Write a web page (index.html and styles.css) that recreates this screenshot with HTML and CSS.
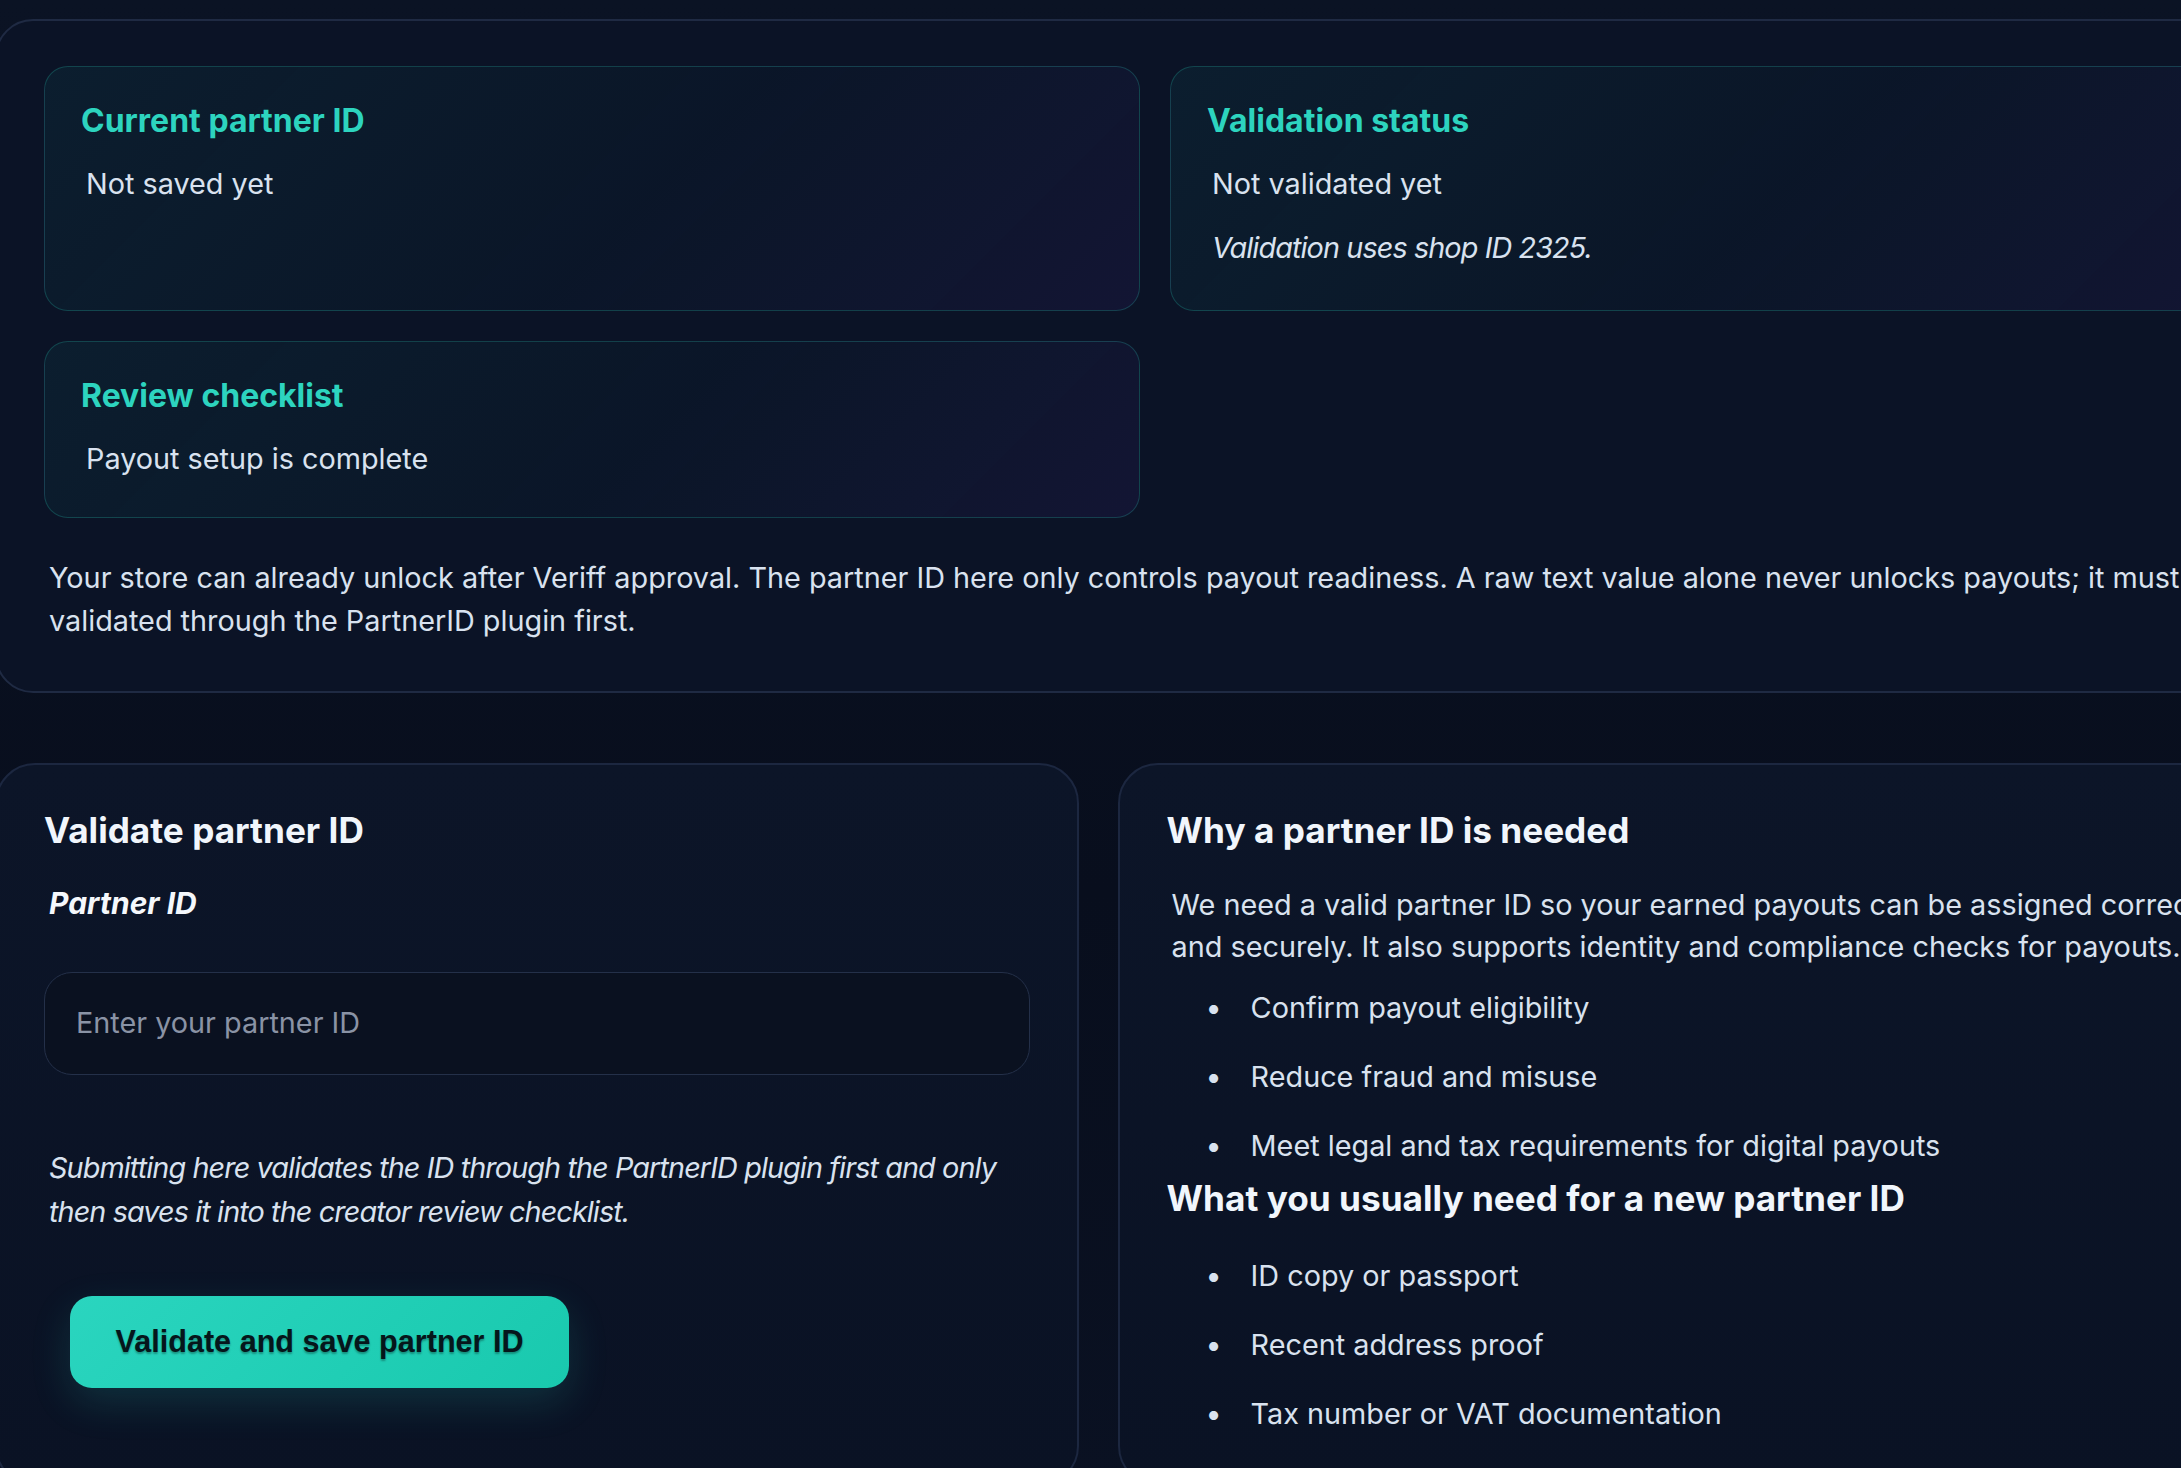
FILE: index.html
```html
<!DOCTYPE html>
<html lang="en">
<head>
    <meta charset="UTF-8">
    <meta name="viewport" content="width=device-width, initial-scale=1.0">
    <title>Partner ID</title>
    <link rel="stylesheet" href="styles.css">
</head>
<body>

<div class="page">
    <section class="summary">
        <div class="status-grid">
            <div class="status-card">
                <h3>Current partner ID</h3>
                <p class="value">Not saved yet</p>
            </div>
            <div class="status-card">
                <h3>Validation status</h3>
                <p class="value">Not validated yet</p>
                <p class="value hint">Validation uses shop ID 2325.</p>
            </div>
            <div class="status-card">
                <h3>Review checklist</h3>
                <p class="value">Payout setup is complete</p>
            </div>
        </div>
        <p class="note">Your store can already unlock after Veriff approval. The partner ID here only controls payout readiness. A raw text value alone never unlocks payouts; it must be validated through the PartnerID plugin first.</p>
    </section>

    <div class="columns">
        <section class="panel">
            <h2>Validate partner ID</h2>
            <form id="partnerForm">
                <label for="partnerId">Partner ID</label>
                <input type="text" id="partnerId" placeholder="Enter your partner ID">
                <p class="help">Submitting here validates the ID through the PartnerID plugin first and only then saves it into the creator review checklist.</p>
                <button type="button">Validate and save partner ID</button>
            </form>
        </section>

        <section class="panel info">
            <h2>Why a partner ID is needed</h2>
            <p>We need a valid partner ID so your earned payouts can be assigned correctly and securely. It also supports identity and compliance checks for payouts.</p>
            <ul>
                <li>Confirm payout eligibility</li>
                <li>Reduce fraud and misuse</li>
                <li>Meet legal and tax requirements for digital payouts</li>
            </ul>
            <h2 class="sub">What you usually need for a new partner ID</h2>
            <ul>
                <li>ID copy or passport</li>
                <li>Recent address proof</li>
                <li>Tax number or VAT documentation</li>
            </ul>
        </section>
    </div>
</div>

</body>
</html>
```

FILE: styles.css
```css
html, body {
    margin: 0;
    overflow: hidden;
}
body {
    font-family: Inter, "Noto Sans", sans-serif;
    font-size: 28.8px;
    line-height: 1.5;
    color: #d9e2ef;
    background: linear-gradient(180deg, #0b1324 0%, #080e1d 60%, #0a1122 100%);
    min-height: 100vh;
}
.page {
    width: 2320px;
    margin-left: -5px;
    padding-top: 19.4px;
}
.summary {
    border: 2px solid #1f2a43;
    border-radius: 38px;
    padding: 45px 47px 48px;
    background: #0b1326;
}
.status-grid {
    display: grid;
    grid-template-columns: 1fr 1fr;
    gap: 30px;
}
.status-card {
    display: flex;
    flex-direction: column;
    gap: 21px;
    padding: 35px 36px 37.5px;
    border: 1.5px solid rgba(45, 212, 191, 0.22);
    border-radius: 24px;
    background: linear-gradient(135deg, rgba(20, 184, 166, 0.07), rgba(20, 184, 166, 0.02) 55%, rgba(124, 58, 237, 0.07));
}
.status-card h3 {
    margin: 0;
    font-size: 32px;
    line-height: 1.2;
    font-weight: 700;
    color: #2dd4bf;
}
.status-card p {
    margin: 0;
    padding-left: 5px;
}
.status-card p.hint {
    margin-bottom: 3.5px;
    font-style: italic;
    letter-spacing: -0.9px;
}
.note {
    margin: 38px 0 0;
    padding-left: 5px;
}
.columns {
    display: grid;
    grid-template-columns: 0.905fr 1fr;
    gap: 39px;
    margin-top: 70px;
}
.panel {
    border: 2px solid #1c2740;
    border-radius: 40px;
    padding: 44px 47px 48px;
    background: linear-gradient(180deg, #0c1528, #0a1224);
}
.panel h2 {
    margin: 0 0 30px;
    font-size: 35.2px;
    line-height: 1.2;
    font-weight: 700;
    color: #f1f6fc;
}
.info {
    line-height: 1.47;
}
.info h2 {
    margin-bottom: 33px;
}
.info h2.sub {
    margin: 10px 0 35px;
}
.info p {
    margin: 0 0 18px;
    padding-left: 5px;
}
.info ul {
    margin: 0;
    padding-left: 84px;
}
.info li::marker {
    content: "\2022\2003";
}
.info li + li {
    margin-top: 27px;
}
label {
    display: block;
    margin-bottom: 46px;
    padding-left: 5px;
    font-size: 30px;
    font-weight: 700;
    font-style: italic;
    color: #f5f8fc;
}
input {
    display: block;
    box-sizing: border-box;
    width: 100%;
    padding: 33.5px 31px;
    font-family: Inter, "Noto Sans", sans-serif;
    font-size: 28.8px;
    line-height: 1.2;
    color: #e2e8f0;
    background: #0a1120;
    border: 1.5px solid #243049;
    border-radius: 28px;
    outline: none;
}
input::placeholder {
    color: #8a93a5;
}
.help {
    margin: 71px 0 63px;
    padding-left: 5px;
    font-style: italic;
    letter-spacing: -0.9px;
}
button {
    margin-left: 26px;
    padding: 28.5px 45.5px;
    font-size: 30.6px;
    font-weight: 700;
    color: #05161b;
    text-shadow: 0 2px 2px rgba(0, 0, 0, 0.3);
    background: linear-gradient(135deg, #2ad5bf, #19c9ae);
    border: none;
    border-radius: 22px;
    box-shadow: 0 14px 40px rgba(45, 212, 191, 0.16);
    cursor: pointer;
}
```
